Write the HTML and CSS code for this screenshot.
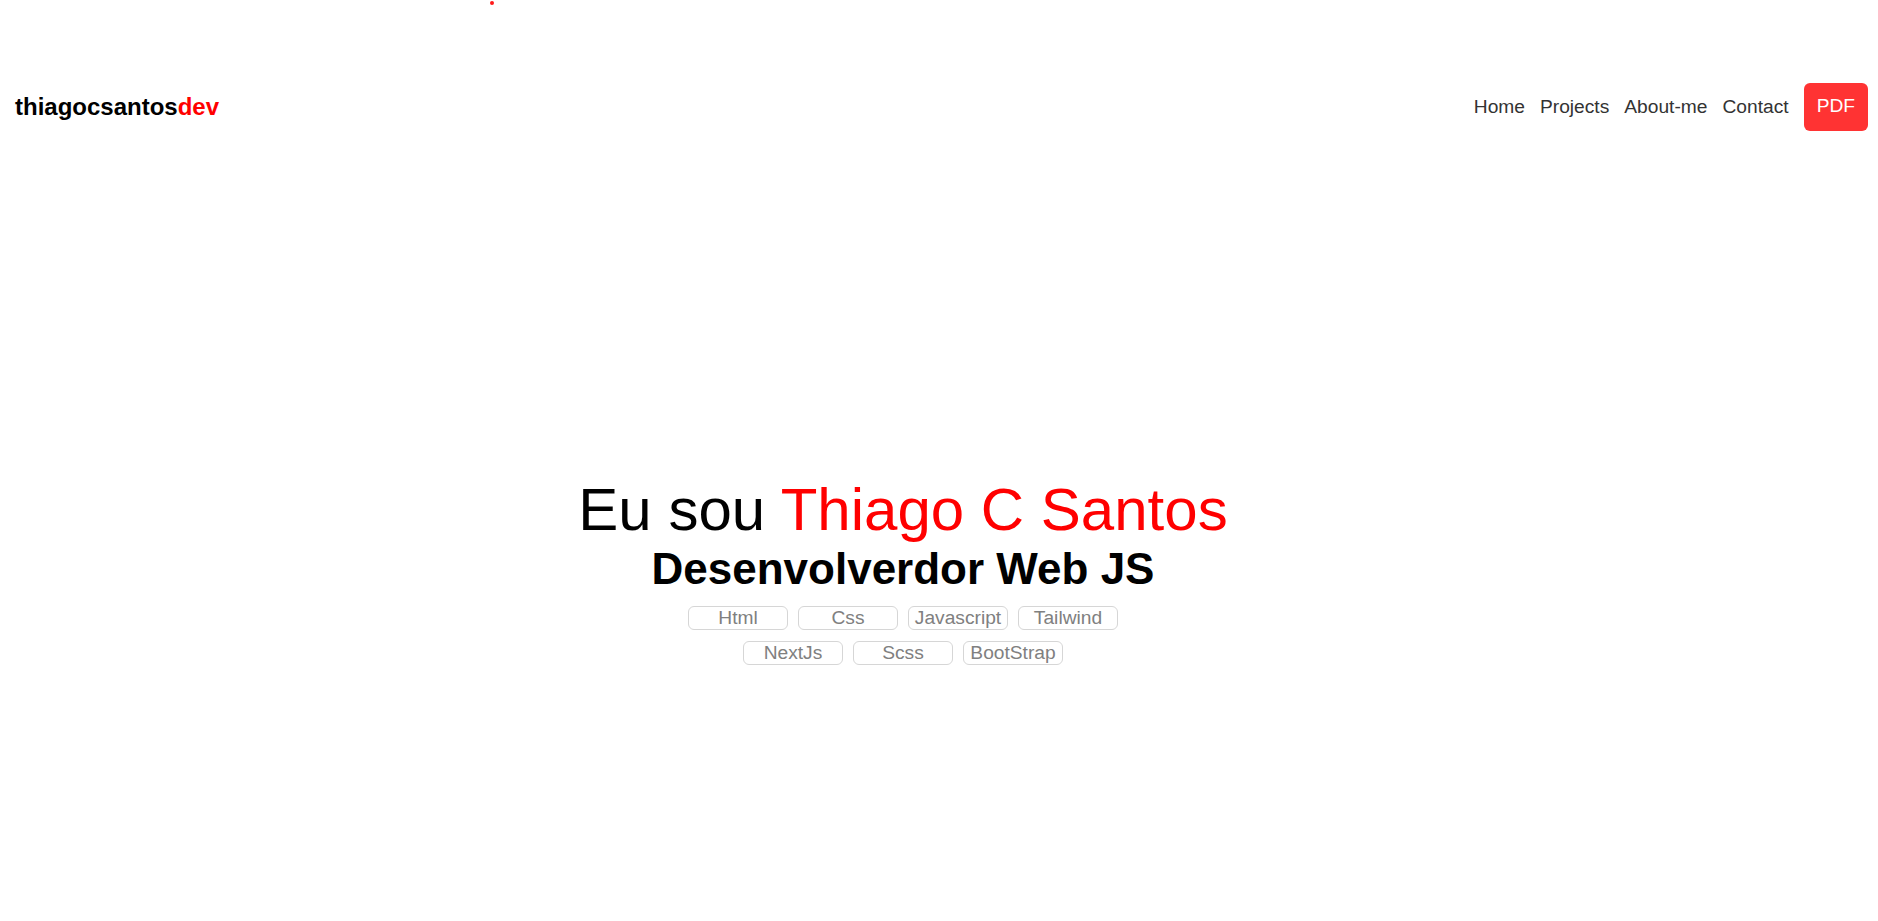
FILE: index.html
```html
<!DOCTYPE html>
<html lang="pt-BR">
<head>
<meta charset="utf-8">
<title>thiagocsantosdev</title>
<link rel="stylesheet" href="styles.css">
</head>
<body>
<span class="cursor-dot"></span>
<header class="header">
  <a class="logo" href="#">thiagocsantos<span class="logo-accent">dev</span></a>
  <nav class="nav">
    <a class="nav-link" href="#">Home</a>
    <a class="nav-link" href="#">Projects</a>
    <a class="nav-link" href="#">About-me</a>
    <a class="nav-link" href="#">Contact</a>
    <a class="pdf-btn" href="#">PDF</a>
  </nav>
</header>
<main class="hero">
  <h1 class="hero-title">Eu sou <span class="hero-name">Thiago C Santos</span></h1>
  <h2 class="hero-subtitle">Desenvolverdor Web JS</h2>
  <div class="tags">
    <div class="tag-row">
      <span class="tag">Html</span>
      <span class="tag">Css</span>
      <span class="tag">Javascript</span>
      <span class="tag">Tailwind</span>
    </div>
    <div class="tag-row">
      <span class="tag">NextJs</span>
      <span class="tag">Scss</span>
      <span class="tag">BootStrap</span>
    </div>
  </div>
</main>
</body>
</html>
```

FILE: styles.css
```css
* {
  box-sizing: border-box;
}

html, body {
  margin: 0;
  padding: 0;
  background: #fff;
}

body {
  font-family: "Liberation Sans", Arial, sans-serif;
  color: #000;
  min-height: 100vh;
  overflow: hidden;
}

.cursor-dot {
  position: absolute;
  left: 490px;
  top: 1px;
  width: 4px;
  height: 4px;
  border-radius: 50%;
  background: #ff1a1a;
}

.header {
  height: 213px;
  display: flex;
  align-items: center;
  justify-content: space-between;
  padding: 0 10px 0 15px;
}

.logo {
  font-size: 24px;
  font-weight: 700;
  color: #000;
  text-decoration: none;
}

.logo-accent {
  color: #ff0000;
}

.nav {
  display: flex;
  align-items: center;
  gap: 15px;
}

.nav-link {
  font-size: 19.2px;
  color: #333;
  text-decoration: none;
}

.pdf-btn {
  font-size: 19.2px;
  color: #fff;
  background: #ff3333;
  text-decoration: none;
  padding: 12px 13px 14px;
  border-radius: 6px;
}

.hero {
  height: calc(100vh - 213px);
  display: flex;
  flex-direction: column;
  align-items: center;
  justify-content: center;
  padding-right: 72px;
  padding-top: 6px;
}

.hero-title {
  margin: 0;
  font-size: 60px;
  font-weight: 400;
  color: #000;
}

.hero-name {
  color: #ff0000;
}

.hero-subtitle {
  margin: 0 0 12px;
  font-size: 44px;
  font-weight: 700;
  color: #000;
}

.tags {
  display: flex;
  flex-direction: column;
  align-items: center;
  gap: 11px;
}

.tag-row {
  display: flex;
  gap: 10px;
}

.tag {
  width: 100px;
  font-size: 19.2px;
  color: #808080;
  text-align: center;
  border: 1px solid #d6d6d6;
  border-radius: 6px;
}
```
